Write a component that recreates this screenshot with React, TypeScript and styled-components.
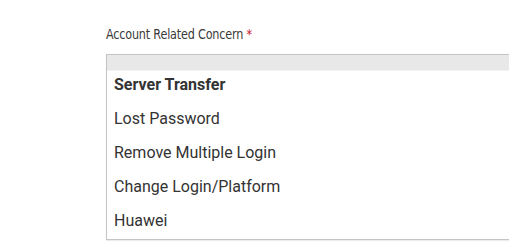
import React from "react";
import styled, { createGlobalStyle } from "styled-components";

const GlobalStyle = createGlobalStyle`
  html, body {
    margin: 0;
    padding: 0;
    background: #fff;
    overflow: hidden;
  }
`;

const OPTIONS = [
  "Server Transfer",
  "Lost Password",
  "Remove Multiple Login",
  "Change Login/Platform",
  "Huawei",
];

export default () => {
  return (
    <>
      <GlobalStyle />
      <Page>
        <Label>
          Account Related Concern <Required>*</Required>
        </Label>
        <Dropdown>
          <SelectBar />
          <List>
            {OPTIONS.map((option, i) => (
              <Option key={option} selected={i === 0}>
                {option}
              </Option>
            ))}
          </List>
        </Dropdown>
      </Page>
    </>
  );
};

const Page = styled.div`
  width: 509px;
  height: 244px;
  padding: 26px 0 0 106px;
  box-sizing: border-box;
  overflow: hidden;
`;

const Label = styled.div`
  font-family: "DejaVu Sans Condensed", sans-serif;
  font-size: 14px;
  letter-spacing: -0.2px;
  line-height: 16px;
  color: #3a3a3a;
  margin-bottom: 12px;
  transform: scaleX(0.89);
  transform-origin: left center;
`;

const Required = styled.span`
  color: #c8102e;
`;

const Dropdown = styled.div`
  width: 480px;
  border: 1px solid #c4c4c4;
  border-right: none;
  background: #fff;
  box-shadow: 0 1px 1px #ececec;
`;

const SelectBar = styled.div`
  height: 15px;
  background: #e8e8e8;
  border-bottom: 1px solid #f2f2f2;
`;

const List = styled.ul`
  list-style: none;
  margin: 0;
  padding: 0;
`;

const Option = styled.li<{ selected?: boolean }>`
  font-family: Roboto, "Liberation Sans", sans-serif;
  font-size: 16px;
  line-height: 28px;
  padding: 0 0 6px 7px;
  color: #333;
  font-weight: ${(p) => (p.selected ? 700 : 400)};

  &:last-child {
    padding-bottom: 4px;
  }
`;
